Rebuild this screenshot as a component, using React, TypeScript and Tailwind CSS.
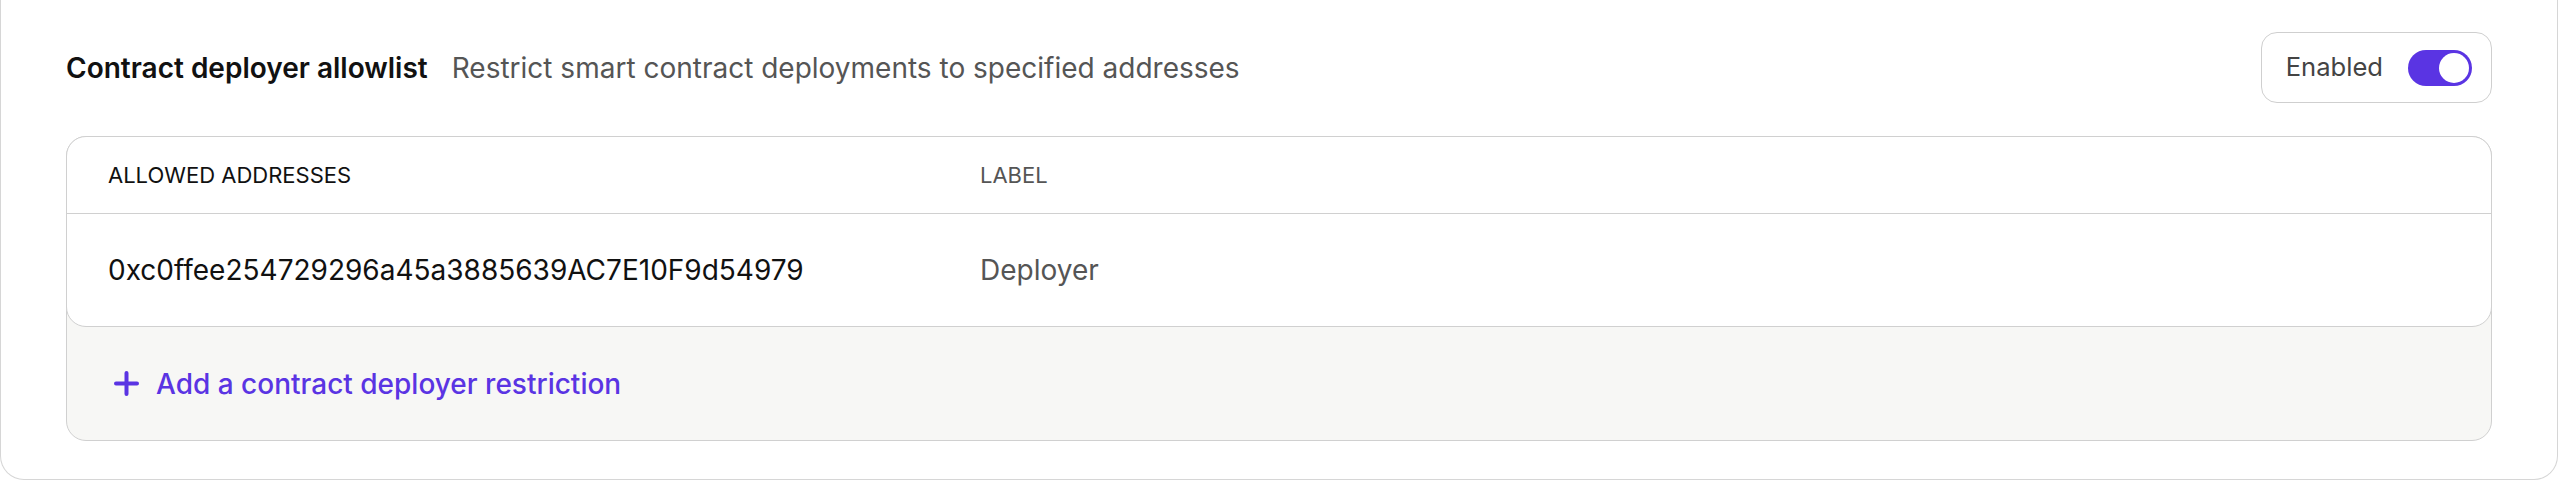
const rows = [{ address: '0xc0ffee254729296a45a3885639AC7E10F9d54979', label: 'Deployer' }];

export default function App() {
  return (
    <div className="w-full h-[480px] bg-white font-['Inter',sans-serif]">
      <div className="h-full border-x border-b border-[#d6d6d6] rounded-b-[24px] px-[65px] pt-[32px]">
        <div className="flex items-center justify-between h-[71px]">
          <div className="flex items-baseline gap-[24px]">
            <h2 className="text-[28px] font-semibold text-[#111]">Contract deployer allowlist</h2>
            <p className="text-[28px] text-[#555]">Restrict smart contract deployments to specified addresses</p>
          </div>
          <button className="h-[71px] flex items-center gap-[25px] pl-[24px] pr-[19px] rounded-[16px] border border-[#cfcfcf] bg-white">
            <span className="text-[25.6px] text-[#444]">Enabled</span>
            <span className="w-[64px] h-[36px] rounded-full bg-[#5a34e3] flex items-center justify-end px-[3px]">
              <span className="w-[30px] h-[30px] rounded-full bg-white" />
            </span>
          </button>
        </div>

        <div className="mt-[33px] rounded-[20px] border border-[#d0d0d0] bg-[#f7f7f5]">
          <div className="-mx-px -mt-px bg-white rounded-[20px] border border-[#d0d0d0]">
            <div className="grid grid-cols-[872px_1fr] items-center h-[77px] px-[41px] border-b border-[#d0d0d0] text-[22px] uppercase">
              <span className="text-[#111]">Allowed addresses</span>
              <span className="text-[#555]">Label</span>
            </div>
            {rows.map((r) => (
              <div key={r.address} className="grid grid-cols-[872px_1fr] items-center h-[112px] px-[41px] text-[28px]">
                <span className="text-[#111]">{r.address}</span>
                <span className="text-[#555]">{r.label}</span>
              </div>
            ))}
          </div>
          <div className="h-[113px] flex items-center gap-[17px] px-[47px] text-[#5a34e3]">
            <svg width="25" height="25" viewBox="0 0 25 25" fill="none" stroke="currentColor" strokeWidth="4" strokeLinecap="round">
              <path d="M12.5 2v21M2 12.5h21" />
            </svg>
            <span className="text-[28px] font-medium">Add a contract deployer restriction</span>
          </div>
        </div>
      </div>
    </div>
  );
}
